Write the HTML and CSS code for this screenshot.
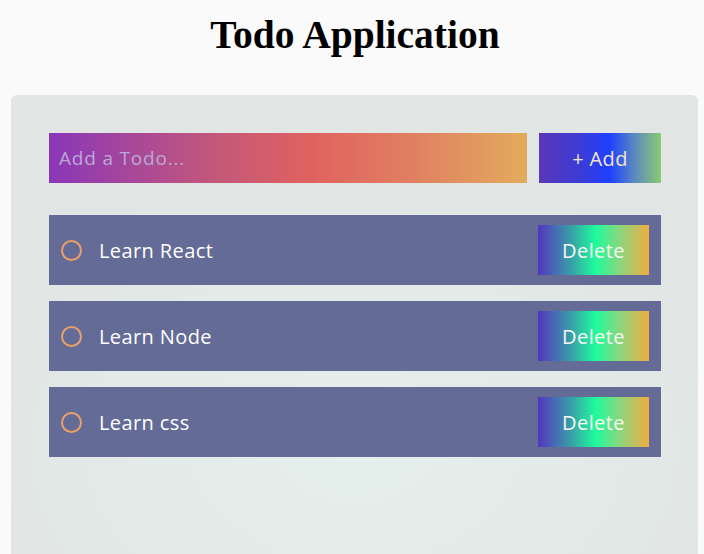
FILE: index.html
```html
<!DOCTYPE html>
<html>
<head>
<meta charset="utf-8">
<link rel="stylesheet" href="styles.css">
</head>
<body>
<h1 class="title">Todo Application</h1>
<main class="panel">
  <form class="add-row" onsubmit="return false">
    <input class="todo-input" type="text" placeholder="Add a Todo...">
    <button class="add-btn" type="submit">+ Add</button>
  </form>
  <ul class="todo-list">
    <li class="todo-item">
      <span class="check"></span>
      <span class="todo-text">Learn React</span>
      <button class="delete-btn">Delete</button>
    </li>
    <li class="todo-item">
      <span class="check"></span>
      <span class="todo-text">Learn Node</span>
      <button class="delete-btn">Delete</button>
    </li>
    <li class="todo-item">
      <span class="check"></span>
      <span class="todo-text">Learn css</span>
      <button class="delete-btn">Delete</button>
    </li>
  </ul>
</main>
</body>
</html>
```
FILE: styles.css
```css
html, body {
  margin: 0;
  padding: 0;
  overflow: hidden;
  height: 100%;
}
body {
  background: #fafafa;
  font-family: "Open Sans", "Noto Sans", sans-serif;
}
.title {
  font-family: "Liberation Serif", serif;
  font-weight: bold;
  font-size: 39.5px;
  line-height: 46px;
  text-align: center;
  margin: 12px 0 0;
  padding-left: 6px;
  color: #000;
}
.panel {
  margin: 37px 6px 0 11px;
  height: 520px;
  border-radius: 6px;
  background: radial-gradient(ellipse 60% 55% at 50% 68%, #e5efec 0%, #e3ebe9 50%, #e1e5e4 100%);
  padding: 38px 37px 0 38px;
  box-sizing: border-box;
}
.add-row {
  display: flex;
  gap: 12px;
  margin: 0;
}
.todo-input {
  flex: 1;
  height: 50px;
  border: none;
  outline: none;
  padding: 0 10px;
  margin: 0;
  font-family: inherit;
  font-size: 19px;
  letter-spacing: 0.8px;
  color: #fff;
  background: linear-gradient(to right, #8a37b8 0%, #c4587a 35%, #e0625f 55%, #e07e62 75%, #e2ab5c 100%);
}
.todo-input::placeholder {
  color: #baa9d8;
}
.add-btn {
  width: 122px;
  height: 50px;
  border: none;
  margin: 0;
  font-family: inherit;
  font-size: 20px;
  letter-spacing: 0.4px;
  color: #f3e4c8;
  background: linear-gradient(to right, #5a37b6 0%, #3a3cd8 35%, #1e40ff 58%, #5a88c0 78%, #8acb70 100%);
}
.todo-list {
  list-style: none;
  margin: 32px 0 0;
  padding: 0;
  display: flex;
  flex-direction: column;
  gap: 16px;
}
.todo-item {
  height: 70px;
  background: #636b96;
  display: flex;
  align-items: center;
  padding: 0 12px;
}
.check {
  width: 17px;
  height: 17px;
  border: 2px solid #eaa068;
  border-radius: 50%;
  flex: none;
}
.todo-text {
  flex: 1;
  margin-left: 17px;
  color: #fff;
  font-size: 20px;
  letter-spacing: 0.4px;
}
.delete-btn {
  width: 111px;
  height: 50px;
  border: none;
  margin: 0;
  font-family: inherit;
  font-size: 20px;
  letter-spacing: 0.4px;
  color: #f7f7f2;
  background: linear-gradient(to right, #5535c0 0%, #3a98a8 28%, #1ffb9c 52%, #90d47a 75%, #f0ad40 100%);
}
```
